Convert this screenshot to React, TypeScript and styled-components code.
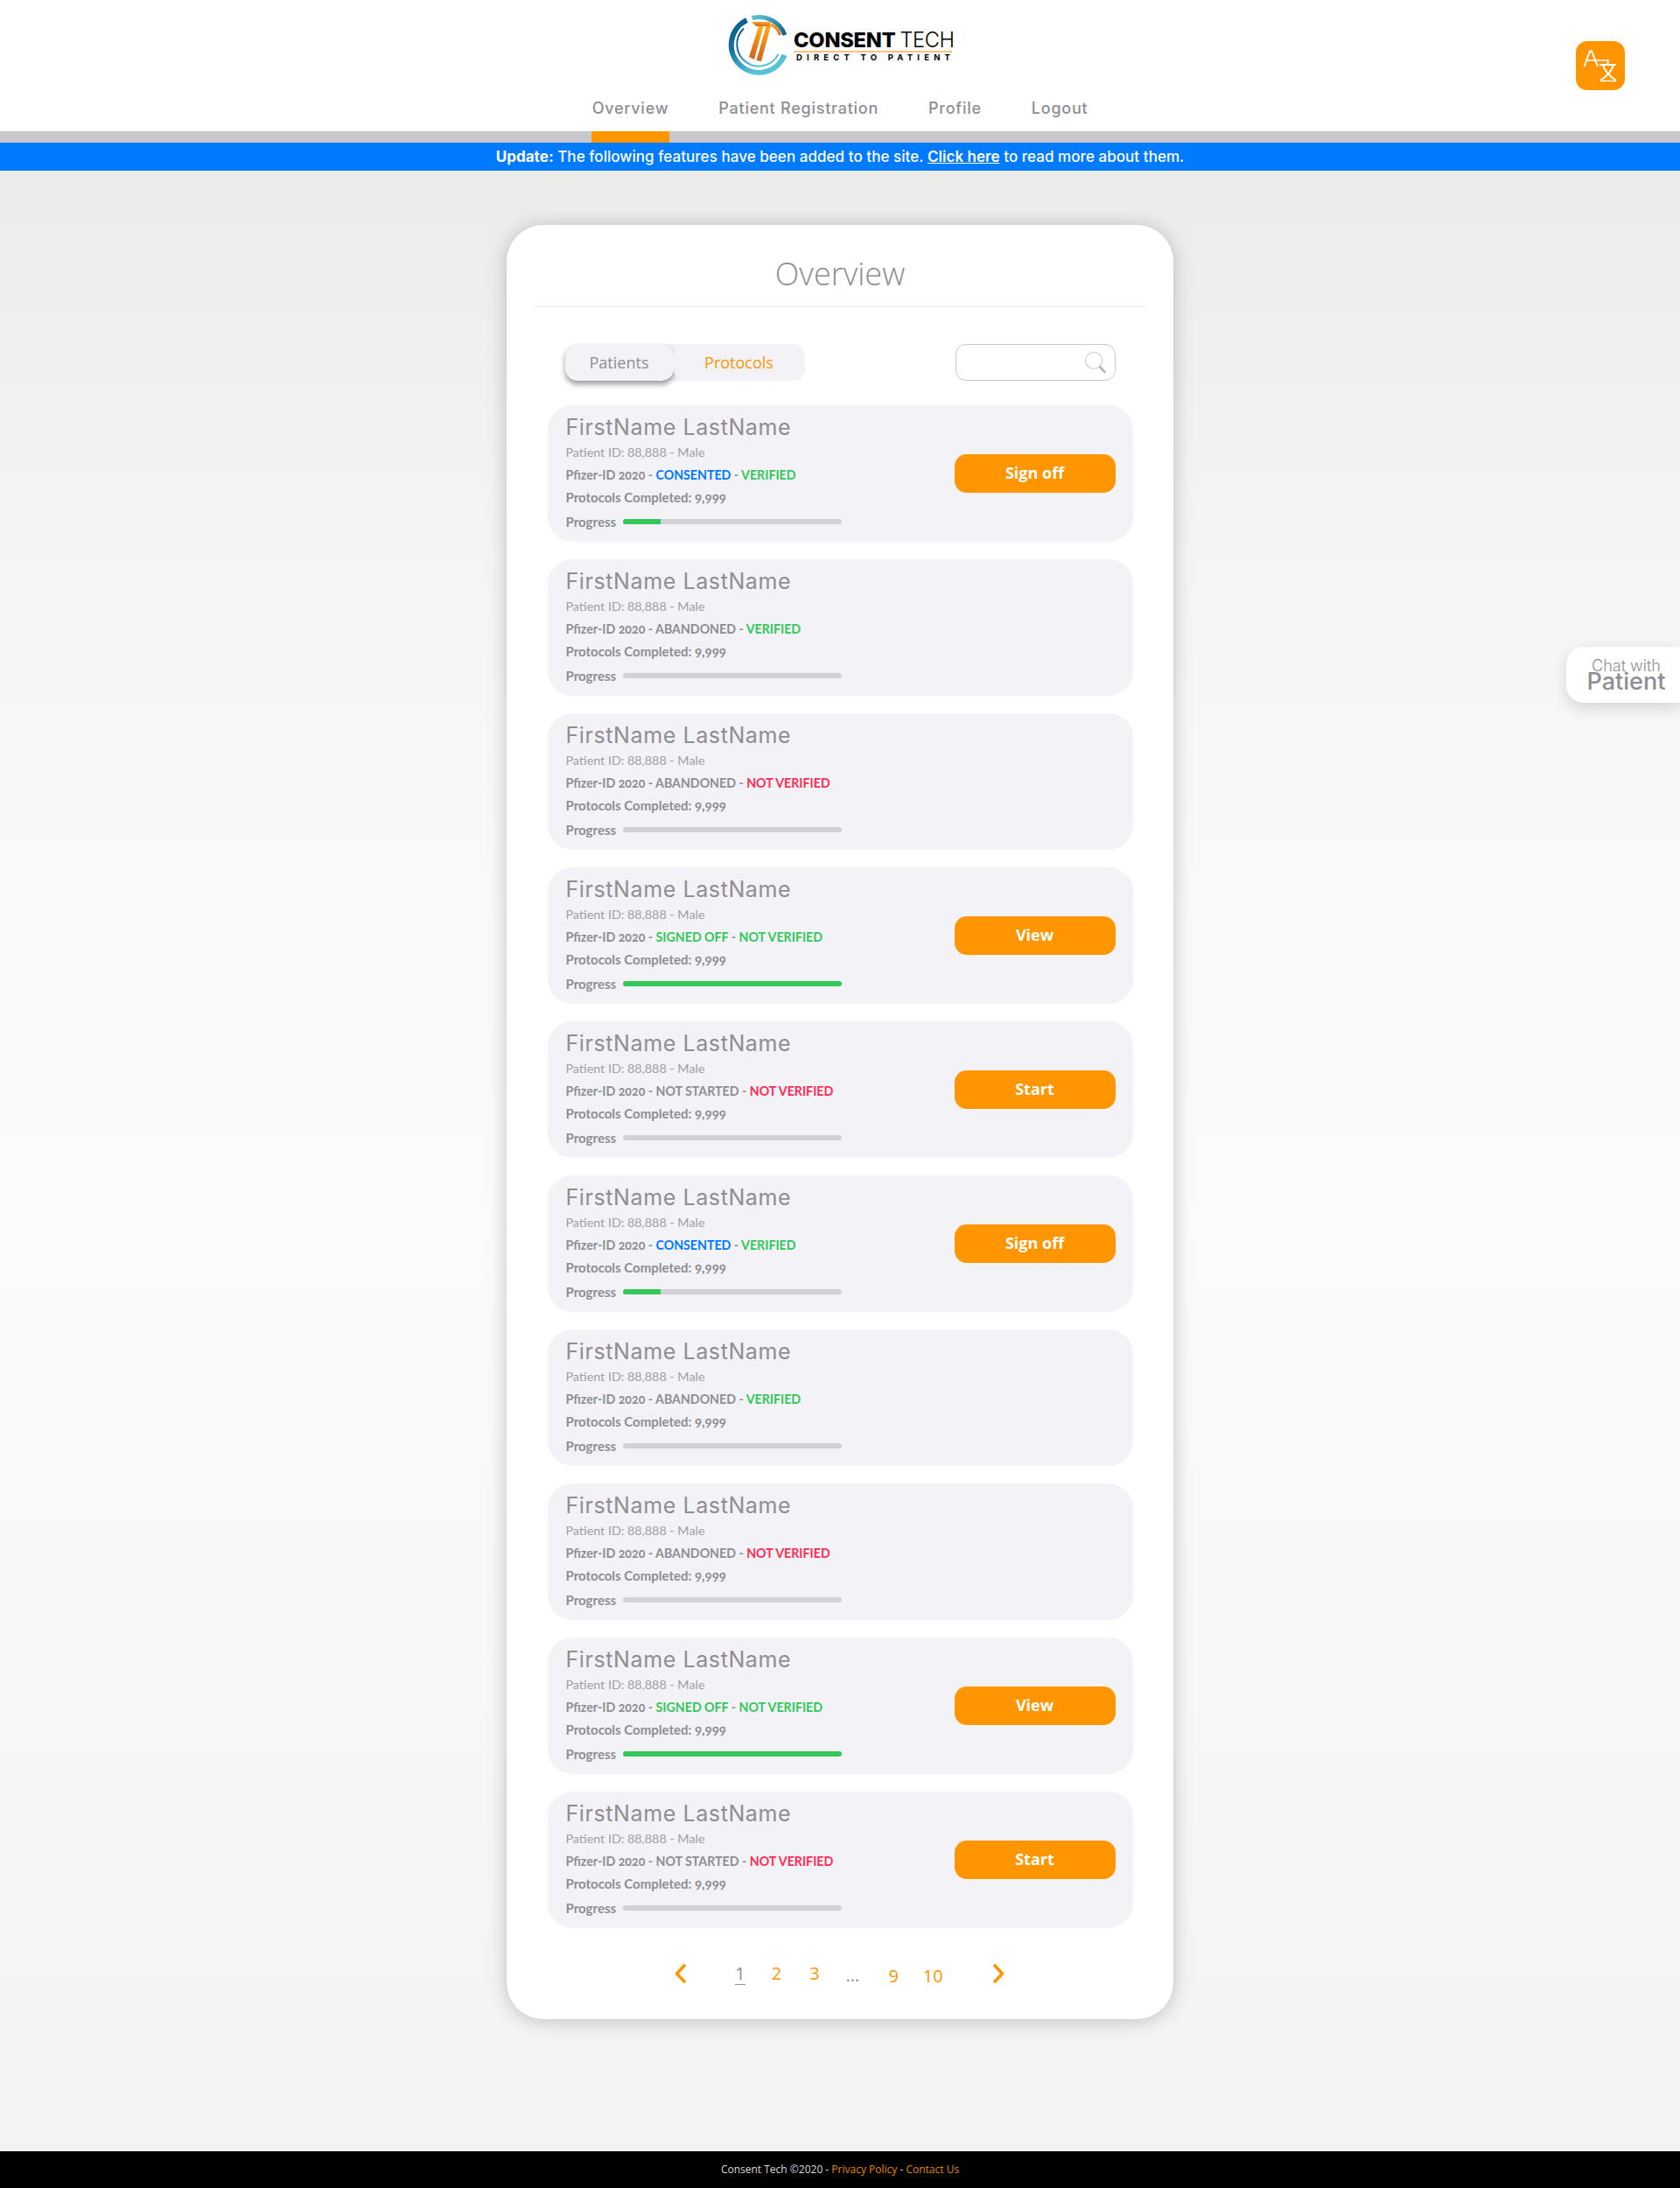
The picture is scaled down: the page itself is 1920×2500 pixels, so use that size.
import { Fragment } from 'react';
import styled, { createGlobalStyle } from 'styled-components';

const GlobalStyle = createGlobalStyle`
  html, body { margin: 0; padding: 0; }
  body { font-family: "Open Sans", sans-serif; color: #8e8e93; }
  * { box-sizing: border-box; }
`;

const Page = styled.div`
  position: relative;
  min-height: 2500px;
  display: flex;
  flex-direction: column;
  background: linear-gradient(180deg, #ebebe9 195px, #f4f4f2 600px, #f9f9f7 1000px, #fbfbf9 1400px, #f8f8f6 1800px, #f3f3f1 2458px);
`;

const Header = styled.header`
  height: 163px;
  background: #fff;
  border-bottom: 13px solid #c7c7cc;
  display: grid;
  grid-template-columns: 1fr auto 1fr;
`;

const HeaderCenter = styled.div`
  grid-column: 2;
  display: flex;
  flex-direction: column;
  align-items: center;
`;

const LogoRow = styled.div`
  display: flex;
  align-items: flex-start;
  height: 98px;
  padding-top: 10px;
  margin-right: 6px;
`;

const LogoText = styled.div`
  margin: 24px 0 0 1px;
  width: 181px;
  color: #000;
`;

const LogoTitle = styled.div`
  font-family: "Inter", sans-serif;
  font-size: 23.6px;
  line-height: 24px;
  font-weight: 800;
  letter-spacing: -0.2px;
  white-space: nowrap;
  border-bottom: 2px solid #fdc283;
  span { font-weight: 300; letter-spacing: -0.4px; }
`;

const LogoSub = styled.div`
  font-family: "Inter", sans-serif;
  font-size: 9.5px;
  line-height: 12px;
  font-weight: 700;
  letter-spacing: 5.2px;
  white-space: nowrap;
  margin: 0 0 0 3px;
`;

const Nav = styled.nav`
  display: flex;
  gap: 57px;
  height: 52px;
`;

const NavItem = styled.a<{ $active?: boolean }>`
  position: relative;
  display: block;
  padding-top: 14px;
  font-family: "Inter", sans-serif;
  font-size: 18px;
  line-height: 24px;
  font-weight: 500;
  letter-spacing: 0.75px;
  color: #8e8e93;
  white-space: nowrap;
  &::after {
    content: '';
    display: ${(p) => (p.$active ? 'block' : 'none')};
    position: absolute;
    left: -1px;
    right: -1px;
    bottom: -13px;
    height: 13px;
    background: #ff9500;
  }
`;

const HeaderRight = styled.div`
  display: flex;
  justify-content: flex-end;
  padding: 47px 63px 0 0;
`;

const TranslateButton = styled.button`
  width: 56px;
  height: 56px;
  padding: 0;
  border: 0;
  border-radius: 13px;
  background: #ff9500;
  display: flex;
  align-items: center;
  justify-content: center;
`;

const UpdateBar = styled.div`
  height: 32px;
  background: #007aff;
  color: #fff;
  font-family: "Inter", sans-serif;
  font-size: 17px;
  line-height: 32px;
  font-weight: 500;
  letter-spacing: 0.05px;
  text-align: center;
  b { font-weight: 700; }
  a { font-weight: 600; color: #fff; text-decoration: underline; }
`;

const Main = styled.main`
  flex: 1;
  display: flex;
  justify-content: center;
  padding-top: 62px;
`;

const Card = styled.section`
  width: 762px;
  height: 2050px;
  background: #fff;
  border-radius: 42px;
  box-shadow: 0 2px 22px rgba(0, 0, 0, 0.22);
  display: flex;
  flex-direction: column;
  align-items: center;
`;

const Title = styled.h1`
  width: 700px;
  height: 94px;
  margin: 0;
  padding-top: 34px;
  border-bottom: 1px solid #e5e5ea;
  font-family: "Open Sans", sans-serif;
  font-size: 36px;
  line-height: 44px;
  font-weight: 300;
  color: #8e8e93;
  text-align: center;
`;

const Toolbar = styled.div`
  width: 629px;
  margin-top: 42px;
  display: flex;
  justify-content: space-between;
`;

const Tabs = styled.div`
  width: 274px;
  height: 42px;
  display: flex;
  background: #f2f2f7;
  border-radius: 14px;
`;

const Tab = styled.button<{ $active?: boolean }>`
  height: 42px;
  width: ${(p) => (p.$active ? '124px' : '150px')};
  padding: 0;
  border: 0;
  border-radius: 14px;
  background: #f2f2f7;
  font-family: "Open Sans", sans-serif;
  font-size: 18px;
  line-height: 42px;
  color: ${(p) => (p.$active ? '#8e8e93' : '#ff9500')};
  box-shadow: ${(p) => (p.$active ? '0 4px 6px rgba(0, 0, 0, 0.4)' : 'none')};
`;

const SearchBox = styled.div`
  width: 183px;
  height: 42px;
  background: #fff;
  border: 1px solid #c7c7cc;
  border-radius: 12px;
  display: flex;
  align-items: center;
  justify-content: flex-end;
  padding-right: 9px;
`;

const RowList = styled.div`
  width: 669px;
  margin-top: 28px;
  display: flex;
  flex-direction: column;
  gap: 20px;
`;

const Row = styled.article`
  height: 156px;
  background: #f2f2f7;
  border-radius: 28px;
  padding: 9px 20px 0 21px;
  display: flex;
  justify-content: space-between;
  align-items: flex-start;
`;

const RowInfo = styled.div`
  display: flex;
  flex-direction: column;
`;

const Name = styled.div`
  font-family: "Inter", sans-serif;
  font-size: 25px;
  line-height: 32px;
  font-weight: 400;
  letter-spacing: 0.6px;
  color: #8e8e93;
`;

const Line = styled.div<{ $size: number; $strong?: boolean }>`
  font-family: "Lato", sans-serif;
  font-size: ${(p) => p.$size}px;
  line-height: 26px;
  font-weight: ${(p) => (p.$strong ? 700 : 400)};
  font-variant-numeric: ${(p) => (p.$strong ? 'oldstyle-nums' : 'normal')};
  color: ${(p) => (p.$strong ? '#8e8e93' : '#a0a0a5')};
  white-space: nowrap;
`;

const Status = styled.span<{ $tone: string }>`
  color: ${(p) => p.$tone};
`;

const CompletedLine = styled(Line)`
  margin-top: -1px;
`;

const ProgressRow = styled(Line)`
  margin-top: 2px;
  display: flex;
  align-items: center;
  gap: 8px;
`;

const Track = styled.div`
  width: 250px;
  height: 6px;
  border-radius: 3px;
  background: #d1d1d6;
  overflow: hidden;
`;

const Fill = styled.div`
  height: 100%;
  background: #34c759;
`;

const ActionButton = styled.button`
  width: 184px;
  height: 44px;
  margin-top: 47px;
  padding: 0 0 2px;
  border: 0;
  border-radius: 14px;
  background: #ff9500;
  color: #fff;
  font-family: "Open Sans", sans-serif;
  font-size: 18px;
  line-height: 38px;
  font-weight: 700;
`;

const Pager = styled.div`
  margin-top: 40px;
  display: flex;
  height: 30px;
  margin-left: -1px;
`;

const PageNumber = styled.a<{ $current?: boolean; $muted?: boolean; $left: number; $down?: number }>`
  display: block;
  height: 25px;
  margin-left: ${(p) => p.$left}px;
  margin-top: ${(p) => p.$down ?? 0}px;
  font-family: "Open Sans", sans-serif;
  font-size: 20px;
  line-height: 23px;
  color: ${(p) => (p.$current || p.$muted ? '#8e8e93' : '#ff9500')};
  border-bottom: ${(p) => (p.$current ? '1px solid #8e8e93' : '0')};
`;

const PageArrow = styled.svg<{ $left?: number }>`
  display: block;
  margin-top: 1px;
  margin-left: ${(p) => p.$left ?? 0}px;
`;

const Footer = styled.footer`
  height: 42px;
  background: #000;
  color: #d8d8d8;
  font-family: "Open Sans", sans-serif;
  font-size: 12px;
  line-height: 42px;
  text-align: center;
  a { color: #e48600; }
`;

const ChatTab = styled.button`
  position: absolute;
  top: 739px;
  right: 0;
  width: 130px;
  height: 64px;
  padding: 0 0 0 7px;
  border: 0;
  border-radius: 20px 0 0 20px;
  background: #fff;
  box-shadow: 0 6px 18px rgba(0, 0, 0, 0.14);
  color: #8e8e93;
  font-family: "Inter", sans-serif;
  text-align: center;
`;

const ChatSmall = styled.div`
  font-size: 18px;
  line-height: 16px;
  font-weight: 300;
`;

const ChatBig = styled.div`
  font-size: 27px;
  line-height: 20px;
  font-weight: 500;
`;

function Logo() {
  return (
    <svg width="80" height="80" viewBox="0 0 80 80">
      <defs>
        <linearGradient id="ringGrad" x1="0" y1="0" x2="0.4" y2="1">
          <stop offset="0" stopColor="#0b5e8c" />
          <stop offset="0.5" stopColor="#1470a4" />
          <stop offset="1" stopColor="#58c3d6" />
        </linearGradient>
        <linearGradient id="topGrad" x1="0" y1="0" x2="1" y2="1">
          <stop offset="0" stopColor="#5fc2d4" />
          <stop offset="1" stopColor="#0c5f8e" />
        </linearGradient>
        <linearGradient id="tGrad" x1="0.7" y1="0" x2="0.3" y2="1">
          <stop offset="0" stopColor="#fda91c" />
          <stop offset="1" stopColor="#d4621f" />
        </linearGradient>
      </defs>
      <g fill="none">
        <path d="M27.5 13 A31.5 31.5 0 1 0 70.5 53" stroke="url(#ringGrad)" strokeWidth="6" />
        <path d="M24 22.5 A25 25 0 1 0 63.5 52" stroke="url(#ringGrad)" strokeWidth="2" />
        <path d="M33.5 10.5 A31.5 31.5 0 0 1 71 30" stroke="url(#topGrad)" strokeWidth="5" />
        <path d="M55 18 C60 20 64 25 65.5 30" stroke="url(#tGrad)" strokeWidth="3.5" />
      </g>
      <path d="M33 15 L55 15 L54 20 L38 20 Z" fill="url(#tGrad)" />
      <path d="M41 20 L46.5 20 L36 58 L30 55 Z" fill="url(#tGrad)" />
      <path d="M49.5 20 L55 20 L44 60 L38.5 59 Z" fill="url(#tGrad)" />
    </svg>
  );
}

function TranslateIcon() {
  return (
    <svg width="56" height="56" viewBox="0 0 56 56" fill="none" stroke="#fff" strokeWidth="2">
      <path d="M9.5 29 L16 11.5 L18 11.5 L25 29" />
      <path d="M12 22 H36" strokeWidth="1.5" />
      <path d="M27 27 H46" />
      <path d="M36.5 21 V27" />
      <path d="M31 27 C33 35 40 41 46 45" />
      <path d="M43 27 C41 35 34 41 28 45" />
      <path d="M28 45.5 H46" strokeWidth="1.4" />
    </svg>
  );
}

function SearchIcon() {
  return (
    <svg width="26" height="26" viewBox="0 0 26 26" fill="none">
      <circle cx="11" cy="11" r="9.5" stroke="#d1d1d6" strokeWidth="1.2" />
      <path d="M18 18 L23.5 24" stroke="#b5b5ba" strokeWidth="2.6" strokeLinecap="round" />
    </svg>
  );
}

function Chevron({ flip, left }: { flip?: boolean; left?: number }) {
  return (
    <PageArrow $left={left} width="14" height="22" viewBox="0 0 14 22" fill="none" stroke="#ff9500" strokeWidth="3.6" strokeLinecap="round" strokeLinejoin="round">
      <path d={flip ? 'M3 2 L11.5 11 L3 20' : 'M11 2 L2.5 11 L11 20'} />
    </PageArrow>
  );
}

const BLUE = '#007aff';
const GREEN = '#34c759';
const RED = '#ff2d55';
const GRAY = '#8e8e93';

type Patient = { parts: [string, string][]; progress: number; action?: string };

const patterns: Patient[] = [
  { parts: [['CONSENTED', BLUE], ['VERIFIED', GREEN]], progress: 17.2, action: 'Sign off' },
  { parts: [['ABANDONED', GRAY], ['VERIFIED', GREEN]], progress: 0 },
  { parts: [['ABANDONED', GRAY], ['NOT VERIFIED', RED]], progress: 0 },
  { parts: [['SIGNED OFF', GREEN], ['NOT VERIFIED', GREEN]], progress: 100, action: 'View' },
  { parts: [['NOT STARTED', GRAY], ['NOT VERIFIED', RED]], progress: 0, action: 'Start' },
];

const patients = [...patterns, ...patterns];

function App() {
  return (
    <Page>
      <GlobalStyle />
      <Header>
        <HeaderCenter>
          <LogoRow>
            <Logo />
            <LogoText>
              <LogoTitle>
                CONSENT <span>TECH</span>
              </LogoTitle>
              <LogoSub>DIRECT TO PATIENT</LogoSub>
            </LogoText>
          </LogoRow>
          <Nav>
            <NavItem $active>Overview</NavItem>
            <NavItem>Patient Registration</NavItem>
            <NavItem>Profile</NavItem>
            <NavItem>Logout</NavItem>
          </Nav>
        </HeaderCenter>
        <HeaderRight>
          <TranslateButton>
            <TranslateIcon />
          </TranslateButton>
        </HeaderRight>
      </Header>
      <UpdateBar>
        <b>Update:</b> The following features have been added to the site. <a>Click here</a> to read more about them.
      </UpdateBar>
      <Main>
        <Card>
          <Title>Overview</Title>
          <Toolbar>
            <Tabs>
              <Tab $active>Patients</Tab>
              <Tab>Protocols</Tab>
            </Tabs>
            <SearchBox>
              <SearchIcon />
            </SearchBox>
          </Toolbar>
          <RowList>
            {patients.map((p, i) => (
              <Row key={i}>
                <RowInfo>
                  <Name>FirstName LastName</Name>
                  <Line $size={14.3}>Patient ID: 88,888 - Male</Line>
                  <Line $size={14.2} $strong>
                    Pfizer-ID 2020
                    {p.parts.map(([label, tone]) => (
                      <Fragment key={label}>
                        {' - '}
                        <Status $tone={tone}>{label}</Status>
                      </Fragment>
                    ))}
                  </Line>
                  <CompletedLine $size={15} $strong>Protocols Completed: 9,999</CompletedLine>
                  <ProgressRow $size={15} $strong>
                    Progress
                    <Track>
                      <Fill style={{ width: `${p.progress}%` }} />
                    </Track>
                  </ProgressRow>
                </RowInfo>
                {p.action && <ActionButton>{p.action}</ActionButton>}
              </Row>
            ))}
          </RowList>
          <Pager>
            <Chevron />
            <PageNumber $current $left={55}>1</PageNumber>
            <PageNumber $left={30}>2</PageNumber>
            <PageNumber $left={32}>3</PageNumber>
            <PageNumber $muted $left={30} $down={2}>...</PageNumber>
            <PageNumber $left={33} $down={3}>9</PageNumber>
            <PageNumber $left={28} $down={3}>10</PageNumber>
            <Chevron flip left={56} />
          </Pager>
        </Card>
      </Main>
      <Footer>
        Consent Tech ©2020 - <a>Privacy Policy</a> - <a>Contact Us</a>
      </Footer>
      <ChatTab>
        <ChatSmall>Chat with</ChatSmall>
        <ChatBig>Patient</ChatBig>
      </ChatTab>
    </Page>
  );
}

export default App;
